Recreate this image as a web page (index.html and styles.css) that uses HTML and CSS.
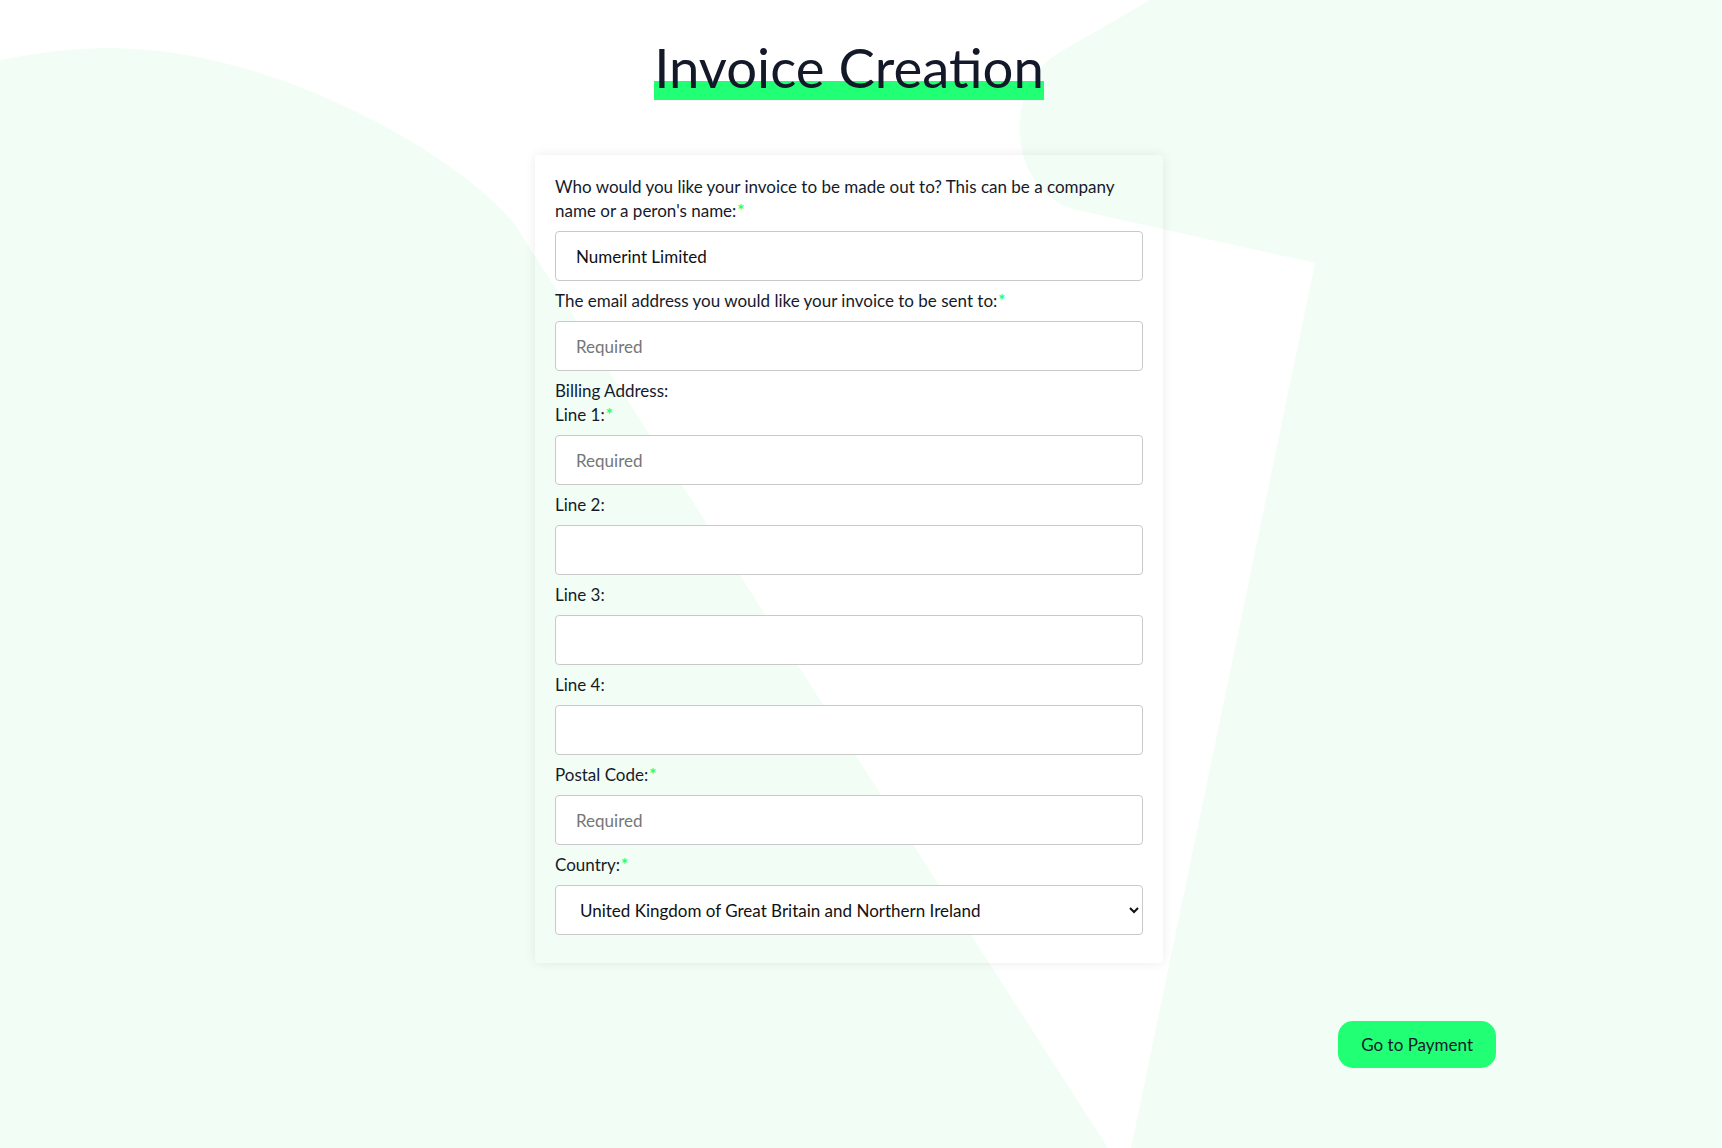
FILE: index.html
```html
<!DOCTYPE html>
<html lang="en">
<head>
<meta charset="utf-8">
<title>Invoice Creation</title>
<link rel="stylesheet" href="styles.css">
</head>
<body>
<svg class="bg-shapes" viewBox="0 0 1722 1148" preserveAspectRatio="none" aria-hidden="true">
  <path class="shape" d="M0,60 C40,52 75,48 110,48 C280,48 465,160 515,225 L1108,1148 L0,1148 Z"/>
  <path class="shape" d="M1150,0 L1060,52 C999,87 1009,195 1077,210 L1315,263 L1131,1148 L1722,1148 L1722,0 Z"/>
</svg>
<main class="page">
  <h1 class="title"><span class="title-text">Invoice Creation</span></h1>
  <form class="card">
    <label class="field-label" for="inv-name">Who would you like your invoice to be made out to? This can be a company name or a peron's name:<span class="req">*</span></label>
    <input class="field" id="inv-name" type="text" value="Numerint Limited">

    <label class="field-label" for="inv-email">The email address you would like your invoice to be sent to:<span class="req">*</span></label>
    <input class="field" id="inv-email" type="email" placeholder="Required">

    <div class="group-label">Billing Address:</div>
    <label class="field-label" for="line1">Line 1:<span class="req">*</span></label>
    <input class="field" id="line1" type="text" placeholder="Required">

    <label class="field-label" for="line2">Line 2:</label>
    <input class="field" id="line2" type="text">

    <label class="field-label" for="line3">Line 3:</label>
    <input class="field" id="line3" type="text">

    <label class="field-label" for="line4">Line 4:</label>
    <input class="field" id="line4" type="text">

    <label class="field-label" for="postal">Postal Code:<span class="req">*</span></label>
    <input class="field" id="postal" type="text" placeholder="Required">

    <label class="field-label" for="country">Country:<span class="req">*</span></label>
    <select class="field select" id="country">
      <option>United Kingdom of Great Britain and Northern Ireland</option>
    </select>
  </form>
  <div class="actions">
    <button class="btn" type="button">Go to Payment</button>
  </div>
</main>
</body>
</html>
```
FILE: styles.css
```css
html, body {
  margin: 0;
  padding: 0;
}

body {
  position: relative;
  min-height: 100vh;
  overflow: hidden;
  background: #ffffff;
  color: #151a2b;
  font-family: Lato, "Noto Sans", sans-serif;
}

.bg-shapes {
  position: absolute;
  top: 0;
  left: 0;
  width: 100%;
  height: 100%;
  z-index: 0;
}

.shape {
  fill: #f2fef5;
}

.page {
  position: relative;
  z-index: 1;
  display: flex;
  flex-direction: column;
  align-items: center;
  padding-right: 24px;
}

.title {
  margin: 34px 0 0;
  font-size: 54.5px;
  font-weight: 400;
  line-height: 66px;
  color: #141929;
}

.title-text {
  background: linear-gradient(to bottom, transparent 71%, #21ff75 71%);
}

.card {
  margin-top: 55px;
  width: 628px;
  box-sizing: border-box;
  padding: 20px;
  display: flex;
  flex-direction: column;
  border-radius: 3px;
  box-shadow: 0 0 12px rgba(0, 0, 0, 0.08);
}

.field-label,
.group-label {
  font-size: 17px;
  line-height: 24px;
}

.field-label {
  margin-bottom: 8px;
}

.req {
  display: inline-block;
  margin-left: 1px;
  color: #21ff75;
  font-weight: 700;
}

.field {
  height: 50px;
  box-sizing: border-box;
  margin: 0 0 8px;
  padding: 0 20px;
  border: 1px solid #c9c9c9;
  border-radius: 4px;
  background: #ffffff;
  color: #111111;
  font-family: Lato, "Noto Sans", sans-serif;
  font-size: 17px;
}

.field::placeholder {
  color: #767676;
}

.select {
  padding: 0 4px 0 20px;
}

.actions {
  align-self: stretch;
  display: flex;
  justify-content: flex-end;
  margin-top: 58px;
  padding-right: 202px;
}

.btn {
  padding: 11px 23px;
  border: none;
  border-radius: 15px;
  background: #21ff75;
  color: #151a2b;
  font-family: Lato, "Noto Sans", sans-serif;
  font-size: 17px;
  line-height: 25px;
  cursor: pointer;
}
```
